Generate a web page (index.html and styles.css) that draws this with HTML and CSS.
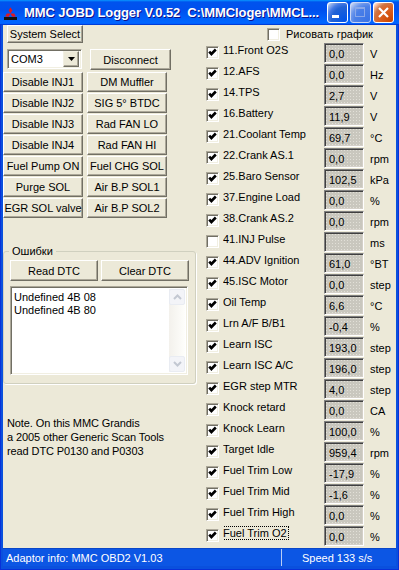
FILE: index.html
```html
<!DOCTYPE html>
<html lang="en">
  <head>
    <meta charset="UTF-8" />
    <title>MMC JOBD Logger</title>
    <link rel="stylesheet" href="styles.css">
  </head>
  <body>
    <div class="window">
      <div class="titlebar">
        <svg class="logo" width="16" height="16" viewBox="0 0 16 16">
          <g transform="translate(7.5,8.5)" fill="#e4161b">
            <path id="dia" d="M0 0 L-1.9 -3.1 L0 -6.2 L1.9 -3.1Z" />
            <use href="#dia" transform="rotate(120)" />
            <use href="#dia" transform="rotate(240)" />
          </g>
          <rect x="1" y="12" width="13" height="3" fill="#111" />
        </svg>
        <span class="title">MMC JOBD Logger V.0.52&nbsp; C:\MMCloger\MMCL...</span>
        <div class="caption">
          <div class="cap cap-min">
            <svg width="19" height="19" viewBox="0 0 19 19"><rect x="4" y="12" width="7" height="3" fill="#fff" /></svg>
          </div>
          <div class="cap cap-max">
            <svg width="19" height="19" viewBox="0 0 19 19"><rect x="4.5" y="4.5" width="9" height="9" fill="none" stroke="#8aa8e8" /><rect x="4" y="4" width="10" height="2" fill="#8aa8e8" /></svg>
          </div>
          <div class="cap cap-close">
            <svg width="19" height="19" viewBox="0 0 19 19"><path d="M5 5 L14 14 M14 5 L5 14" stroke="#fff" stroke-width="2.2" /></svg>
          </div>
        </div>
      </div>

      <div class="client">
        <div class="left">
          <button class="btn sys-btn">System Select</button>
          <div class="com-row">
            <div class="combo">
              <span class="combo-text">COM3</span>
              <span class="combo-drop">
                <svg width="7" height="4" viewBox="0 0 7 4"><path d="M0 0 H7 L3.5 4Z" fill="#000" /></svg>
              </span>
            </div>
            <button class="btn disc-btn">Disconnect</button>
          </div>
          <div class="btn-grid">
            <button class="btn">Disable INJ1</button>
            <button class="btn">DM Muffler</button>
            <button class="btn">Disable INJ2</button>
            <button class="btn">SIG 5° BTDC</button>
            <button class="btn">Disable INJ3</button>
            <button class="btn">Rad FAN LO</button>
            <button class="btn">Disable INJ4</button>
            <button class="btn">Rad FAN HI</button>
            <button class="btn">Fuel Pump ON</button>
            <button class="btn">Fuel CHG SOL</button>
            <button class="btn">Purge SOL</button>
            <button class="btn">Air B.P SOL1</button>
            <button class="btn">EGR SOL valve</button>
            <button class="btn">Air B.P SOL2</button>
          </div>

          <fieldset class="group">
            <legend>Ошибки</legend>
            <div class="dtc-buttons">
              <button class="btn dtc-btn">Read DTC</button>
              <button class="btn dtc-btn">Clear DTC</button>
            </div>
            <div class="listbox">
              <div class="list-items">
                <div>Undefined 4B 08</div>
                <div>Undefined 4B 80</div>
              </div>
              <div class="scroll">
                <div class="scroll-btn">
                  <svg width="9" height="6" viewBox="0 0 9 6"><path d="M1 5 L4.5 1.5 L8 5" fill="none" stroke="#c3c8d2" stroke-width="2" /></svg>
                </div>
                <div class="scroll-track"></div>
                <div class="scroll-btn">
                  <svg width="9" height="6" viewBox="0 0 9 6"><path d="M1 1 L4.5 4.5 L8 1" fill="none" stroke="#c3c8d2" stroke-width="2" /></svg>
                </div>
              </div>
            </div>
          </fieldset>

          <p class="note">
            Note. On this MMC Grandis<br />
            a 2005 other Generic Scan Tools<br />
            read DTC P0130 and P0303
          </p>
        </div>

        <div class="right">
          <div class="graph-row">
            <span class="cb"></span>
            <span class="graph-label">Рисовать график</span>
          </div>
          <div id="rows"></div>
        </div>
      </div>

      <div class="statusbar">
        <span class="panel panel-info">Adaptor info: MMC OBD2 V1.03</span>
        <span class="panel panel-speed">Speed 133 s/s</span>
      </div>
    </div>

    <template id="row-template">
      <div class="row">
        <span class="cb"></span>
        <span class="lbl"><span class="lbl-text"></span></span>
        <span class="val"></span>
        <span class="unit"></span>
      </div>
    </template>

    <script>
      // parameter list: label, value, unit, checked
      const params = [
        ["11.Front O2S", "0,0", "V", true],
        ["12.AFS", "0,0", "Hz", true],
        ["14.TPS", "2,7", "V", true],
        ["16.Battery", "11,9", "V", true],
        ["21.Coolant Temp", "69,7", "°C", true],
        ["22.Crank AS.1", "0,0", "rpm", true],
        ["25.Baro Sensor", "102,5", "kPa", true],
        ["37.Engine Load", "0,0", "%", true],
        ["38.Crank AS.2", "0,0", "rpm", true],
        ["41.INJ Pulse", "", "ms", false],
        ["44.ADV Ignition", "61,0", "°BT", true],
        ["45.ISC Motor", "0,0", "step", true],
        ["Oil Temp", "6,6", "°C", true],
        ["Lrn A/F B/B1", "-0,4", "%", true],
        ["Learn ISC", "193,0", "step", true],
        ["Learn ISC A/C", "196,0", "step", true],
        ["EGR step MTR", "4,0", "step", true],
        ["Knock retard", "0,0", "CA", true],
        ["Knock Learn", "100,0", "%", true],
        ["Target Idle", "959,4", "rpm", true],
        ["Fuel Trim Low", "-17,9", "%", true],
        ["Fuel Trim Mid", "-1,6", "%", true],
        ["Fuel Trim High", "0,0", "%", true],
        ["Fuel Trim O2", "0,0", "%", true]
      ];

      const check =
        '<svg width="11" height="11" viewBox="0 0 11 11"><path d="M2.2 4.6 L4.4 7 L8.8 2.5" fill="none" stroke="#000" stroke-width="2.6" /></svg>';

      const template = document.querySelector("#row-template").content;
      const rows = document.querySelector("#rows");

      params.forEach((p, i) => {
        const klon = template.cloneNode(true);
        klon.querySelector(".lbl-text").textContent = p[0];
        klon.querySelector(".val").textContent = p[1];
        klon.querySelector(".unit").textContent = p[2];
        if (p[3]) klon.querySelector(".cb").innerHTML = check;
        if (i == params.length - 1) klon.querySelector(".lbl-text").classList.add("focus");
        rows.appendChild(klon);
      });
    </script>
  </body>
</html>
```

FILE: styles.css
```css
* {
  box-sizing: border-box;
}
body {
  margin: 0;
  font-family: "Liberation Sans", Arial, sans-serif;
  font-size: 11px;
  color: #000;
}
.window {
  width: 399px;
  height: 570px;
  display: flex;
  flex-direction: column;
  background: #0a50dd;
  box-shadow: inset 1px 0 #0831d9, inset -1px 0 #0831d9, inset 0 -1px #0831d9;
  overflow: hidden;
}

/* title bar */
.titlebar {
  height: 25px;
  flex: none;
  display: flex;
  align-items: center;
  padding-left: 3px;
  background: linear-gradient(
    to bottom,
    #0997ff 0%,
    #0053ee 8%,
    #0050ee 40%,
    #0066ff 88%,
    #0066ff 93%,
    #005bff 95%,
    #003dd7 96%,
    #003dd7 100%
  );
}
.logo {
  flex: none;
}
.title {
  margin-left: 5px;
  color: #fff;
  font-weight: bold;
  font-size: 13px;
  letter-spacing: -0.1px;
  white-space: nowrap;
  text-shadow: 1px 1px #0f1089;
}
.caption {
  margin-left: auto;
  margin-right: 5px;
  display: flex;
  gap: 2px;
}
.cap {
  width: 21px;
  height: 21px;
  border: 1px solid #fff;
  border-radius: 3px;
}
.cap-min {
  background: radial-gradient(circle at 90% 90%, #0054e9 0%, #2263d5 55%, #4479e4 70%, #a3bbec 90%, #fff 100%);
}
.cap-max {
  border-color: #c9d6f5;
  background: radial-gradient(circle at 90% 90%, #3b74e6 0%, #4b80e8 55%, #6a95eb 70%, #b1c6f1 90%, #e6edfb 100%);
}
.cap-close {
  background: radial-gradient(circle at 90% 90%, #cc4600 0%, #dc6527 55%, #cd7546 70%, #ffccb2 90%, #fff 100%);
}

/* client area */
.client {
  flex: 1;
  margin: 0 3px;
  background: #ece9d8;
  display: flex;
}
.left {
  width: 193px;
  flex: none;
  display: flex;
  flex-direction: column;
  align-items: flex-start;
}
.right {
  flex: 1;
  padding-left: 10px;
}

.btn {
  font-family: inherit;
  font-size: 11px;
  color: #000;
  background: #ece9d8;
  border: 1px solid;
  border-color: #fff #716f64 #716f64 #fff;
  box-shadow: inset -1px -1px #aca899;
  padding: 0;
  white-space: nowrap;
  overflow: hidden;
  display: flex;
  align-items: center;
  justify-content: center;
}
.sys-btn {
  margin-left: 4px;
  width: 76px;
  height: 18px;
}
.com-row {
  margin-top: 6px;
  display: flex;
  align-items: flex-start;
}
.combo {
  margin-left: 4px;
  width: 75px;
  height: 20px;
  background: #fff;
  border: 1px solid;
  border-color: #aca899 #fff #fff #aca899;
  box-shadow: inset 1px 1px #716f64, inset -1px -1px #f1efe2;
  display: flex;
  align-items: center;
  padding: 2px;
}
.combo-text {
  flex: 1;
  padding-left: 1px;
}
.combo-drop {
  width: 16px;
  height: 16px;
  background: #ece9d8;
  border: 1px solid;
  border-color: #f1efe2 #716f64 #716f64 #f1efe2;
  box-shadow: inset -1px -1px #aca899;
  display: flex;
  align-items: center;
  justify-content: center;
}
.disc-btn {
  margin-left: 8px;
  width: 81px;
  height: 21px;
}
.btn-grid {
  margin-top: 2px;
  display: grid;
  grid-template-columns: 80px 80px;
  grid-auto-rows: 20px;
  column-gap: 4px;
  row-gap: 1px;
}

/* DTC group */
.group {
  margin: 27px 0 0 0;
  width: 190px;
  height: 139px;
  padding: 0 6px;
  border: 1px solid #d0d0bf;
  border-radius: 3px;
  box-shadow: 1px 1px #fff;
}
.group legend {
  padding: 0 3px;
  margin-left: -1px;
  line-height: 13px;
}
.dtc-buttons {
  margin-top: 2px;
  display: flex;
  gap: 3px;
}
.dtc-btn {
  width: 88px;
  height: 21px;
}
.listbox {
  margin-top: 5px;
  width: 178px;
  height: 89px;
  background: #fff;
  border: 1px solid;
  border-color: #aca899 #fff #fff #aca899;
  box-shadow: inset 1px 1px #716f64, inset -1px -1px #f1efe2;
  padding: 2px;
  display: flex;
}
.list-items {
  flex: 1;
  padding: 2px 0 0 1px;
  line-height: 13px;
}
.scroll {
  width: 16px;
  display: flex;
  flex-direction: column;
  background: linear-gradient(to right, #f3f1ec, #fefefb);
}
.scroll-btn {
  height: 16px;
  border: 1px solid #e9ecf2;
  border-radius: 2px;
  background: #f3f4f8;
  display: flex;
  align-items: center;
  justify-content: center;
}
.scroll-track {
  flex: 1;
}
.note {
  margin: 32px 0 0 4px;
  line-height: 14px;
  letter-spacing: -0.1px;
}

/* parameter list */
.graph-row {
  height: 18px;
  display: flex;
  align-items: center;
  padding-left: 61px;
}
.graph-label {
  margin-left: 6px;
}
.cb {
  width: 13px;
  height: 13px;
  flex: none;
  background: #fff;
  border: 1px solid;
  border-color: #aca899 #fff #fff #aca899;
  box-shadow: inset 1px 1px #716f64, inset -1px -1px #f1efe2;
  display: block;
}
.cb svg {
  display: block;
}
.row {
  height: 21px;
  display: flex;
  align-items: flex-start;
}
.row .cb {
  margin-top: 3px;
}
.lbl {
  width: 101px;
  margin-left: 4px;
  line-height: 15px;
  white-space: nowrap;
  overflow: hidden;
}
.focus {
  outline: 1px dotted #000;
  outline-offset: 0;
  padding: 0 1px;
  margin-left: -1px;
}
.val {
  width: 40px;
  height: 20px;
  flex: none;
  padding: 3px 0 0 4px;
  line-height: 14px;
  border: 1px solid;
  border-color: #808080 #fff #fff #808080;
  box-shadow: inset 1px 1px #404040, inset -1px -1px #d4d0c8;
  background-color: #c9c7be;
  background-image: radial-gradient(circle, #e2e0d8 0.6px, transparent 0.9px);
  background-size: 3px 3px;
}
.unit {
  margin: 4px 0 0 6px;
  line-height: 15px;
}

/* status bar */
.statusbar {
  height: 18px;
  flex: none;
  margin: 0 3px 4px 3px;
  background: #0c56e4;
  border-top: 1px solid #0a46c8;
  color: #fff;
  display: flex;
  align-items: center;
}
.panel-info {
  width: 279px;
  padding-left: 3px;
  border-right: 1px solid #b9cdf5;
  height: 100%;
  display: flex;
  align-items: center;
}
.panel-speed {
  padding-left: 20px;
}
```
